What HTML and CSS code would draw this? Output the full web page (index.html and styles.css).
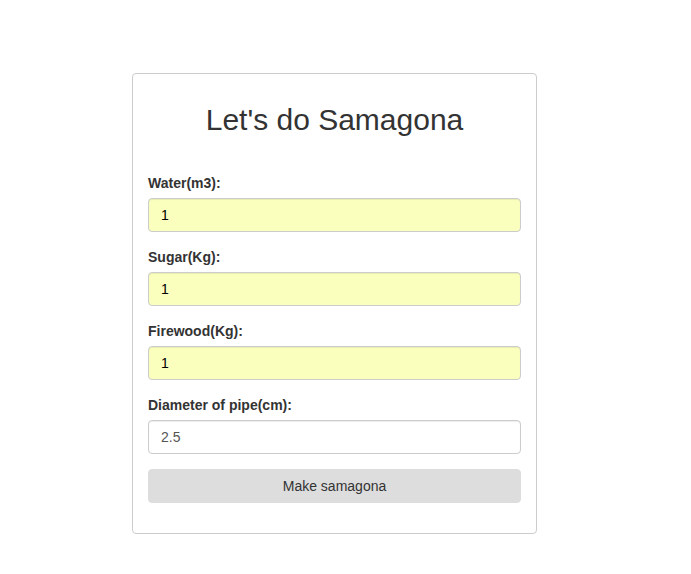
FILE: index.html
```html
<!DOCTYPE html>
<html>
<head>
<meta charset="utf-8">
<link rel="stylesheet" href="styles.css">
</head>
<body>
<div class="page">
  <form class="card">
    <h2 class="title">Let's do Samagona</h2>
    <div class="group">
      <label class="label">Water(m3):</label>
      <input class="field autofill" value="1">
    </div>
    <div class="group">
      <label class="label">Sugar(Kg):</label>
      <input class="field autofill" value="1">
    </div>
    <div class="group">
      <label class="label">Firewood(Kg):</label>
      <input class="field autofill" value="1">
    </div>
    <div class="group">
      <label class="label">Diameter of pipe(cm):</label>
      <input class="field" value="2.5">
    </div>
    <button type="button" class="btn">Make samagona</button>
  </form>
</div>
</body>
</html>
```
FILE: styles.css
```css
html, body {
  margin: 0;
  padding: 0;
  background: #fff;
}
body {
  font-family: "Liberation Sans", Arial, sans-serif;
  font-size: 14px;
  line-height: 20px;
  color: #333;
}
.page {
  padding: 73px 0 0 132px;
}
.card {
  width: 373px;
  padding: 29px 15px 30px;
  border: 1px solid #ccc;
  border-radius: 4px;
  display: flex;
  flex-direction: column;
}
.title {
  margin: 0 0 37px;
  font-size: 30px;
  font-weight: 400;
  line-height: 33px;
  text-align: center;
  color: #333;
}
.group {
  display: flex;
  flex-direction: column;
  margin-bottom: 15px;
}
.label {
  font-weight: 700;
  margin-bottom: 5px;
  line-height: 20px;
}
.field {
  box-sizing: border-box;
  height: 34px;
  width: 100%;
  padding: 6px 12px;
  font-family: inherit;
  font-size: 14px;
  line-height: 20px;
  color: #555;
  background: #fff;
  border: 1px solid #ccc;
  border-radius: 4px;
  box-shadow: inset 0 1px 1px rgba(0,0,0,.075);
  outline: none;
}
.field.autofill {
  background: #faffbd;
  color: #000;
}
.btn {
  box-sizing: border-box;
  height: 34px;
  width: 100%;
  padding: 6px 12px;
  font-family: inherit;
  font-size: 14px;
  line-height: 20px;
  color: #333;
  background: #ddd;
  border: 1px solid #ddd;
  border-radius: 4px;
}
```
